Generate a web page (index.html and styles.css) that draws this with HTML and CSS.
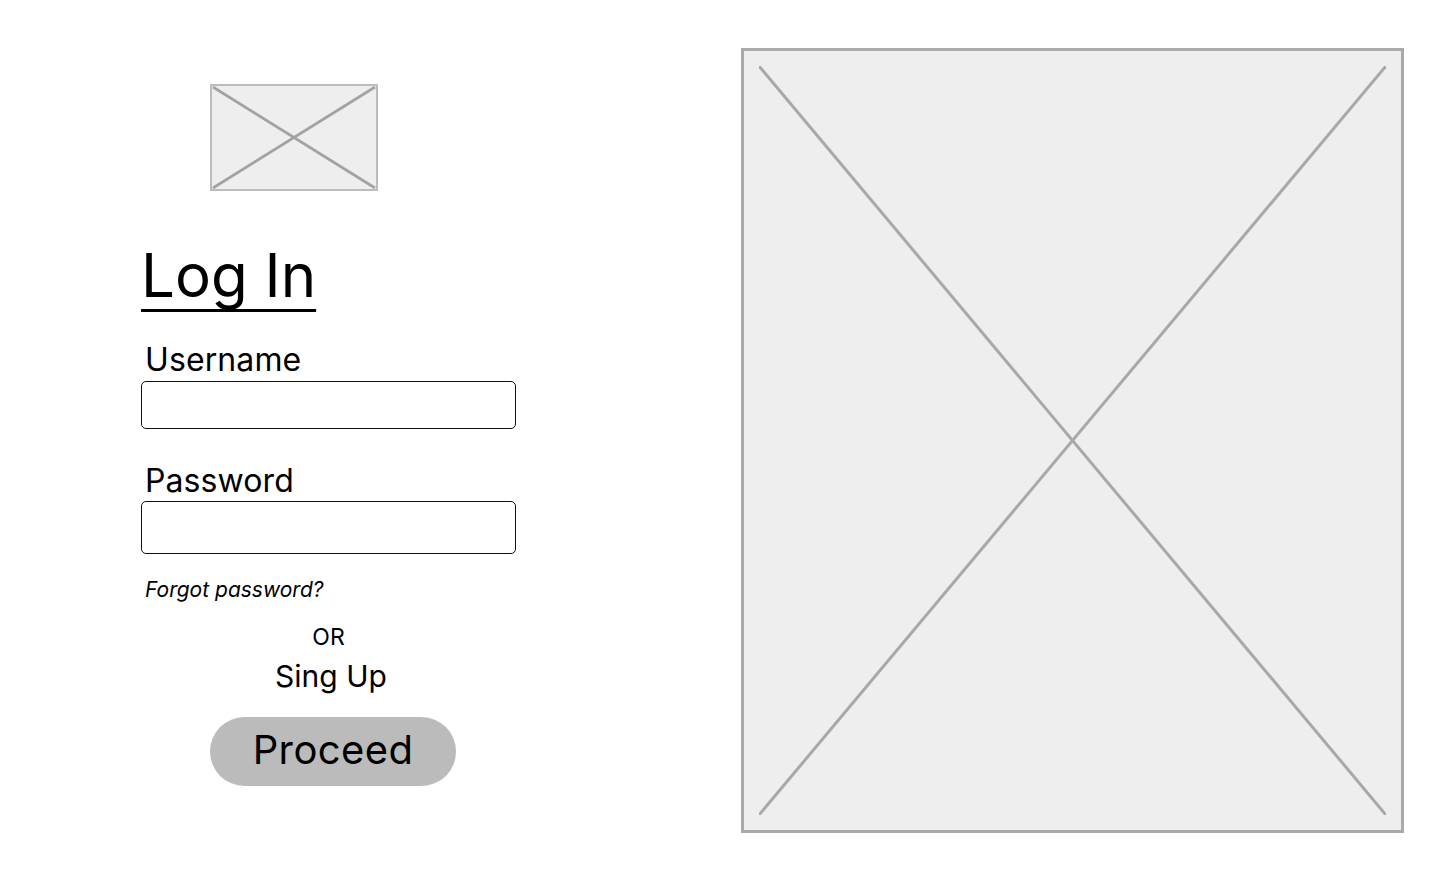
FILE: index.html
```html
<!DOCTYPE html>
<html lang="en">
<head>
<meta charset="utf-8">
<title>Log In</title>
<link rel="stylesheet" href="styles.css">
</head>
<body>
<div class="page">
  <main class="form-col">
    <div class="logo">
      <svg class="x-svg" viewBox="0 0 164 103" preserveAspectRatio="none">
        <line x1="1" y1="1" x2="163" y2="102"/>
        <line x1="163" y1="1" x2="1" y2="102"/>
      </svg>
    </div>
    <h1 class="title">Log In</h1>
    <label class="label label-user" for="user">Username</label>
    <input class="field field-user" id="user" type="text">
    <label class="label label-pass" for="pass">Password</label>
    <input class="field field-pass" id="pass" type="password">
    <a class="forgot" href="#">Forgot password?</a>
    <div class="or">OR</div>
    <a class="signup" href="#">Sing Up</a>
    <button class="proceed" type="button">Proceed</button>
  </main>
  <aside class="hero">
    <svg class="hero-svg" viewBox="0 0 627 749" preserveAspectRatio="none">
      <line x1="0" y1="0" x2="627" y2="749"/>
      <line x1="627" y1="0" x2="0" y2="749"/>
    </svg>
  </aside>
</div>
</body>
</html>
```
FILE: styles.css
```css
* { box-sizing: border-box; }
html, body { margin: 0; padding: 0; background: #fff; }
body {
  font-family: Inter, "Noto Sans", "Liberation Sans", sans-serif;
  color: #000;
  width: 1437px;
  height: 882px;
  overflow: hidden;
}
.page {
  display: flex;
  align-items: flex-start;
  padding-top: 48px;
}
.form-col {
  display: flex;
  flex-direction: column;
  width: 375px;
  margin-left: 141px;
}
.logo {
  width: 168px;
  height: 107px;
  margin-top: 36px;
  margin-left: 69px;
  background: #eeeeee;
  border: 2px solid #bcbcbc;
}
.x-svg, .hero-svg { display: block; width: 100%; height: 100%; }
.x-svg line { stroke: #a2a2a2; stroke-width: 2.8; vector-effect: non-scaling-stroke; }
.title {
  margin: 54px 0 0 0;
  font-size: 60px;
  line-height: 60px;
  font-weight: 400;
  text-decoration: underline;
  text-decoration-thickness: 3px;
  text-underline-offset: 12px;
  text-decoration-skip-ink: none;
  align-self: flex-start;
}
.label {
  font-size: 32px;
  line-height: 32px;
  margin-left: 4px;
  letter-spacing: 0.1px;
}
.label-user { margin-top: 39px; }
.label-pass { margin-top: 36px; }
.field {
  display: block;
  width: 375px;
  border: 1.5px solid #111;
  border-radius: 5px;
  background: #fff;
  padding: 0 10px;
  font: inherit;
  font-size: 20px;
  outline: none;
}
.field-user { height: 48px; margin-top: 5px; }
.field-pass { height: 53px; margin-top: 4px; }
.forgot {
  margin-top: 25px;
  margin-left: 4px;
  font-size: 21px;
  line-height: 21px;
  font-style: italic;
  color: #000;
  text-decoration: none;
  align-self: flex-start;
}
.or {
  margin-top: 25px;
  font-size: 23px;
  line-height: 24px;
  text-align: center;
}
.signup {
  margin-top: 12px;
  font-size: 30px;
  line-height: 30px;
  color: #000;
  text-decoration: none;
  align-self: center;
  margin-left: 5px;
}
.proceed {
  margin-top: 26px;
  margin-left: 69px;
  width: 246px;
  height: 69px;
  border: none;
  border-radius: 35px;
  background: #bbbbbb;
  font-family: inherit;
  font-size: 40px;
  letter-spacing: 0.4px;
  color: #000;
  padding: 0 0 5px 0;
  align-self: flex-start;
}
.hero {
  width: 663px;
  height: 785px;
  margin-left: auto;
  margin-right: 33px;
  background: #eeeeee;
  border: 3px solid #aaaaaa;
  padding: 15px;
}
.hero-svg line { stroke: #a8a8a8; stroke-width: 3; vector-effect: non-scaling-stroke; }
```
